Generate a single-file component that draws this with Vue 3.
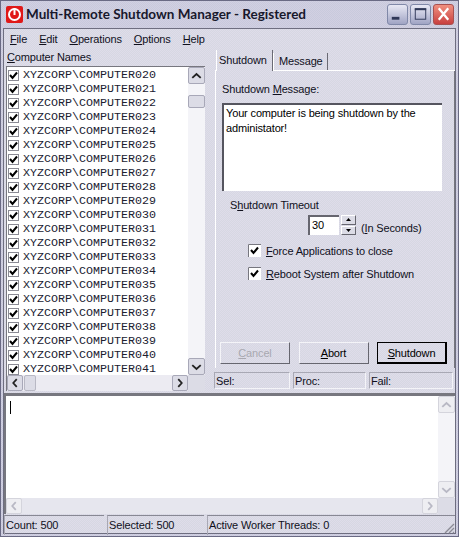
<template>
  <div class="window">
    <div class="titlebar">
      <svg class="app-icon" width="17" height="17" viewBox="0 0 17 17">
        <rect width="17" height="17" rx="2" fill="#e01818" />
        <circle cx="8.5" cy="8.5" r="5.5" fill="none" stroke="#fff" stroke-width="2" />
        <rect x="7.5" y="2" width="2" height="7" fill="#fff" />
      </svg>
      <span class="title">Multi-Remote Shutdown Manager - Registered</span>
      <div class="caption-btns">
        <div class="cap-btn">
          <svg width="20" height="20" viewBox="0 0 20 20"><rect x="4" y="13" width="8" height="3" fill="#303858" /></svg>
        </div>
        <div class="cap-btn">
          <svg width="20" height="20" viewBox="0 0 20 20"><rect x="4.5" y="4.5" width="11" height="11" fill="none" stroke="#303858" /><rect x="4" y="4" width="12" height="2" fill="#303858" /></svg>
        </div>
        <div class="cap-btn close">
          <svg width="20" height="20" viewBox="0 0 20 20"><path d="M5 4 L15 16 M15 4 L5 16" stroke="#fff" stroke-width="2.4" /></svg>
        </div>
      </div>
    </div>

    <div class="client">
      <div class="menubar">
        <span v-for="m in menus" :key="m.rest"><u>{{ m.key }}</u>{{ m.rest }}</span>
      </div>

      <div class="main">
        <div class="left">
          <div class="list-label"><u>C</u>omputer Names</div>
          <div class="list-box">
            <div class="list-top">
              <div class="rows">
                <div v-for="c in computers" :key="c" class="row">
                  <svg class="check" width="11" height="11" viewBox="0 0 11 11">
                    <rect x="0.5" y="0.5" width="10" height="10" fill="#fff" stroke="#8a8a94" />
                    <path d="M2 5 L4.5 8 L9 2.5" fill="none" stroke="#000" stroke-width="2" />
                  </svg>
                  <span>{{ c }}</span>
                </div>
              </div>
              <div class="vscroll">
                <div class="sb-btn"><svg width="16" height="16" viewBox="0 0 16 16"><path d="M3.5 10 L8 6 L12.5 10" fill="none" stroke="#222" stroke-width="2" /></svg></div>
                <div class="sb-thumb-v"></div>
                <div class="sb-fill"></div>
                <div class="sb-btn"><svg width="16" height="16" viewBox="0 0 16 16"><path d="M3.5 6 L8 10 L12.5 6" fill="none" stroke="#222" stroke-width="2" /></svg></div>
              </div>
            </div>
            <div class="hscroll">
              <div class="sb-btn"><svg width="16" height="16" viewBox="0 0 16 16"><path d="M10 3.5 L6 8 L10 12.5" fill="none" stroke="#222" stroke-width="2" /></svg></div>
              <div class="sb-thumb-h"></div>
              <div class="sb-fill"></div>
              <div class="sb-btn"><svg width="16" height="16" viewBox="0 0 16 16"><path d="M6 3.5 L10 8 L6 12.5" fill="none" stroke="#222" stroke-width="2" /></svg></div>
              <div class="sb-corner"></div>
            </div>
          </div>
        </div>

        <div class="right">
          <div class="tabs">
            <div class="tab active">Shutdown</div>
            <div class="tab">Message</div>
          </div>
          <div class="tab-body">
            <div class="msg-label">Shutdown <u>M</u>essage:</div>
            <div class="msg-box">Your computer is being shutdown by the administator!</div>
            <div class="timeout-label">S<u>h</u>utdown Timeout</div>
            <div class="timeout-row">
              <div class="spin-input">30</div>
              <div class="spin-btns">
                <div class="spin-btn"><svg width="5" height="3" viewBox="0 0 5 3"><path d="M2.5 0 L5 3 H0 Z" fill="#000" /></svg></div>
                <div class="spin-btn"><svg width="5" height="3" viewBox="0 0 5 3"><path d="M0 0 H5 L2.5 3 Z" fill="#000" /></svg></div>
              </div>
              <span class="seconds">(<u>I</u>n Seconds)</span>
            </div>
            <label class="opt">
              <svg width="13" height="13" viewBox="0 0 13 13"><rect width="13" height="13" fill="#fff" /><path d="M0.5 13 V0.5 H13" fill="none" stroke="#77777f" /><path d="M3 6 L5.5 9 L10 3.5" fill="none" stroke="#000" stroke-width="2" /></svg>
              <span><u>F</u>orce Applications to close</span>
            </label>
            <label class="opt">
              <svg width="13" height="13" viewBox="0 0 13 13"><rect width="13" height="13" fill="#fff" /><path d="M0.5 13 V0.5 H13" fill="none" stroke="#77777f" /><path d="M3 6 L5.5 9 L10 3.5" fill="none" stroke="#000" stroke-width="2" /></svg>
              <span><u>R</u>eboot System after Shutdown</span>
            </label>
            <div class="actions">
              <button class="btn disabled"><u>C</u>ancel</button>
              <button class="btn"><u>A</u>bort</button>
              <button class="btn default"><u>S</u>hutdown</button>
            </div>
          </div>
          <div class="stats">
            <div class="stat s1">Sel:</div>
            <div class="stat s2">Proc:</div>
            <div class="stat s3">Fail:</div>
          </div>
        </div>
      </div>

      <div class="log-box">
        <div class="log-top">
          <div class="log-text"><span class="caret"></span></div>
          <div class="vscroll faded">
            <div class="sb-btn"><svg width="16" height="16" viewBox="0 0 16 16"><path d="M3.5 10 L8 6 L12.5 10" fill="none" stroke="#b8b8c4" stroke-width="2" /></svg></div>
            <div class="sb-fill"></div>
            <div class="sb-btn"><svg width="16" height="16" viewBox="0 0 16 16"><path d="M3.5 6 L8 10 L12.5 6" fill="none" stroke="#b8b8c4" stroke-width="2" /></svg></div>
          </div>
        </div>
        <div class="hscroll faded">
          <div class="sb-btn"><svg width="16" height="16" viewBox="0 0 16 16"><path d="M10 3.5 L6 8 L10 12.5" fill="none" stroke="#b8b8c4" stroke-width="2" /></svg></div>
          <div class="sb-fill"></div>
          <div class="sb-btn"><svg width="16" height="16" viewBox="0 0 16 16"><path d="M6 3.5 L10 8 L6 12.5" fill="none" stroke="#b8b8c4" stroke-width="2" /></svg></div>
          <div class="sb-corner"></div>
        </div>
      </div>

      <div class="statusbar">
        <div class="cell c1">Count: 500</div>
        <div class="cell c2">Selected: 500</div>
        <div class="cell c3">Active Worker Threads: 0</div>
        <svg class="grip" width="12" height="12" viewBox="0 0 12 12">
          <path d="M11 2 L2 11 M11 6 L6 11 M11 10 L10 11" stroke="#8a8a94" stroke-width="1.4" />
        </svg>
      </div>
    </div>
  </div>
</template>

<script setup>
const menus = [
  { key: 'F', rest: 'ile' },
  { key: 'E', rest: 'dit' },
  { key: 'O', rest: 'perations' },
  { key: 'O', rest: 'ptions' },
  { key: 'H', rest: 'elp' }
]

const computers = []
for (let i = 20; i <= 41; i++) {
  computers.push('XYZCORP\\COMPUTER0' + i)
}
</script>

<style>
html, body {
  margin: 0;
  background: #fff;
}
</style>

<style scoped>
.window {
  box-sizing: border-box;
  width: 459px;
  height: 537px;
  display: flex;
  flex-direction: column;
  padding: 0 2px 2px;
  border: 1px solid #6a6a84;
  background: repeating-conic-gradient(#d2cfe2 0 25%, #c8cadc 0 50%) 0 0 / 2px 2px;
  font-family: "Liberation Sans", Arial, sans-serif;
  font-size: 11px;
  letter-spacing: -0.15px;
  color: #10101c;
  overflow: hidden;
}

.titlebar {
  box-sizing: border-box;
  height: 28px;
  flex: none;
  display: flex;
  align-items: center;
  margin: 0 -2px;
  padding: 0 4px 2px 5px;
}

.app-icon {
  flex: none;
}

.title {
  margin-left: 3px;
  font-family: Lato, sans-serif;
  font-size: 13.5px;
  font-weight: 700;
  letter-spacing: 0;
  color: #18182c;
  white-space: nowrap;
}

.caption-btns {
  margin-left: auto;
  display: flex;
  gap: 2px;
}

.cap-btn {
  width: 21px;
  height: 21px;
  box-sizing: border-box;
  display: flex;
  align-items: center;
  justify-content: center;
  border: 1px solid #8088a8;
  border-radius: 3px;
  background: linear-gradient(#e8e8f4, #a0a4c4);
}

.cap-btn.close {
  border-color: #a85050;
  background: linear-gradient(#f09080, #c84040);
}

.client {
  flex: 1;
  min-height: 0;
  display: flex;
  flex-direction: column;
  border: 1px solid #6e6e80;
  margin-top: -1px;
  background: repeating-conic-gradient(#dfdcea 0 25%, #d6d8e2 0 50%) 0 0 / 2px 2px;
}

.menubar {
  height: 20px;
  flex: none;
  display: flex;
  align-items: center;
  gap: 12px;
  padding-left: 6px;
}

.main {
  height: 344px;
  flex: none;
  display: flex;
}

.left {
  width: 206px;
  flex: none;
  display: flex;
  flex-direction: column;
}

.list-label {
  height: 17px;
  line-height: 17px;
  padding-left: 3px;
}

.list-box {
  box-sizing: border-box;
  height: 325px;
  margin-left: 2px;
  margin-right: 5px;
  display: flex;
  flex-direction: column;
  border-top: 1px solid #77777f;
  border-left: 1px solid #77777f;
}

.list-top {
  flex: 1;
  min-height: 0;
  display: flex;
  background: #fff;
}

.rows {
  flex: 1;
  overflow: hidden;
  padding-top: 1px;
}

.row {
  height: 14px;
  display: flex;
  align-items: center;
  padding-left: 1px;
  font-family: "Liberation Mono", monospace;
  font-size: 11.67px;
  letter-spacing: 0;
  color: #202030;
  white-space: nowrap;
}

.check {
  margin-right: 4px;
  flex: none;
}

.vscroll {
  width: 17px;
  flex: none;
  display: flex;
  flex-direction: column;
  background: #f4f4f8;
}

.hscroll {
  height: 16px;
  flex: none;
  display: flex;
  background: #ecebf2;
}

.sb-btn {
  width: 17px;
  height: 17px;
  box-sizing: border-box;
  flex: none;
  display: flex;
  align-items: center;
  justify-content: center;
  border: 1px solid #a8a8b8;
  border-radius: 2px;
  background: #dcdce6;
}

.hscroll .sb-btn {
  height: 16px;
  width: 16px;
}

.sb-thumb-v {
  height: 13px;
  margin-top: 11px;
  box-sizing: border-box;
  border: 1px solid #a8a8b8;
  border-radius: 2px;
  background: #dcdce6;
}

.sb-thumb-h {
  width: 12px;
  margin-left: 1px;
  box-sizing: border-box;
  border: 1px solid #b8b8c4;
  border-radius: 2px;
  background: #dcdce6;
}

.sb-fill {
  flex: 1;
}

.sb-corner {
  width: 17px;
  flex: none;
  background: #dcdce6;
}

.faded .sb-btn {
  border-color: #d4d4dc;
  background: #eeeef2;
}

.right {
  flex: 1;
  min-width: 0;
  display: flex;
  flex-direction: column;
  padding-left: 5px;
}

.tabs {
  height: 22px;
  flex: none;
  display: flex;
  align-items: flex-end;
  padding-left: 1px;
  border-bottom: 1px solid #fff;
  box-sizing: border-box;
}

.tab {
  box-sizing: border-box;
  width: 55px;
  height: 17px;
  line-height: 16px;
  padding-left: 5px;
  border-left: 1px solid #fff;
  border-right: 1px solid #6a6a74;
}

.tab.active {
  height: 21px;
  line-height: 20px;
  width: 57px;
  padding-left: 2px;
  margin-bottom: -1px;
  background: repeating-conic-gradient(#dfdcea 0 25%, #d6d8e2 0 50%) 0 0 / 2px 2px;
}

.tab-body {
  box-sizing: border-box;
  height: 297px;
  flex: none;
  display: flex;
  flex-direction: column;
  padding: 11px 0 0 6px;
  border-left: 1px solid #fff;
  border-right: 1px solid #77777f;
}

.msg-label {
  height: 14px;
  line-height: 14px;
}

.msg-box {
  box-sizing: border-box;
  width: 220px;
  height: 88px;
  margin-top: 7px;
  padding: 1px 2px;
  background: #fff;
  border-top: 2px solid #55555f;
  border-left: 2px solid #55555f;
  line-height: 15px;
  color: #000;
}

.timeout-label {
  margin-top: 7px;
  margin-left: 8px;
  height: 14px;
  line-height: 14px;
}

.timeout-row {
  display: flex;
  align-items: center;
  height: 20px;
  margin-top: 3px;
  margin-left: 86px;
}

.spin-input {
  box-sizing: border-box;
  width: 31px;
  height: 20px;
  padding-left: 2px;
  line-height: 17px;
  background: #fff;
  border-top: 2px solid #66666f;
  border-left: 2px solid #66666f;
  color: #000;
}

.spin-btns {
  width: 15px;
  height: 20px;
  margin-left: 2px;
  display: flex;
  flex-direction: column;
  gap: 1px;
}

.spin-btn {
  flex: 1;
  display: flex;
  align-items: center;
  justify-content: center;
  background: #dcdce6;
  border-right: 1px solid #66666f;
  border-bottom: 1px solid #66666f;
  border-top: 1px solid #fff;
  border-left: 1px solid #fff;
}

.seconds {
  margin-left: 5px;
  margin-top: 5px;
}

.opt {
  display: flex;
  align-items: center;
  gap: 5px;
  height: 15px;
  margin-left: 26px;
  margin-top: 8px;
}

.actions {
  margin-top: auto;
  margin-bottom: 4px;
  display: flex;
  margin-left: -2px;
  margin-right: 7px;
  justify-content: space-between;
}

.btn {
  box-sizing: border-box;
  width: 70px;
  height: 22px;
  padding: 0;
  font: inherit;
  letter-spacing: inherit;
  color: #000;
  background: transparent;
  border: 1px solid;
  border-color: #f4f4f8 #66666f #66666f #f4f4f8;
}

.btn.disabled {
  color: #a8a8b0;
}

.btn.default {
  border: 1px solid #000;
  border-right-width: 2px;
  border-bottom-width: 2px;
}

.stats {
  flex: 1;
  display: flex;
  align-items: flex-start;
  padding-top: 4px;
  gap: 3px;
  margin-left: -1px;
}

.stat {
  box-sizing: border-box;
  height: 17px;
  line-height: 16px;
  padding-left: 1px;
  border-top: 1px solid #a8a8b4;
  border-left: 1px solid #a8a8b4;
  border-bottom: 1px solid #f4f4f8;
  border-right: 1px solid #f4f4f8;
}

.s1 { width: 76px; }
.s2 { width: 73px; }
.s3 { width: 84px; }

.log-box {
  box-sizing: border-box;
  height: 121px;
  flex: none;
  display: flex;
  flex-direction: column;
  border-top: 3px solid #77777f;
}

.log-top {
  flex: 1;
  min-height: 0;
  display: flex;
  background: #fff;
  border-left: 2px solid #77777f;
}

.log-text {
  flex: 1;
  padding: 5px 0 0 4px;
}

.caret {
  display: block;
  width: 1px;
  height: 13px;
  background: #000;
}

.log-box .hscroll {
  border-left: 2px solid #77777f;
  background: #e6e6ee;
}

.statusbar {
  height: 20px;
  flex: none;
  margin-top: 1px;
  display: flex;
  align-items: stretch;
  gap: 3px;
  position: relative;
}

.cell {
  box-sizing: border-box;
  line-height: 18px;
  padding-left: 1px;
  border-top: 1px solid #888894;
  border-left: 1px solid #a8a8b4;
}

.c1 { width: 100px; }
.c2 { width: 97px; }
.c3 { flex: 1; }

.grip {
  position: absolute;
  right: 0;
  bottom: 1px;
}
</style>
